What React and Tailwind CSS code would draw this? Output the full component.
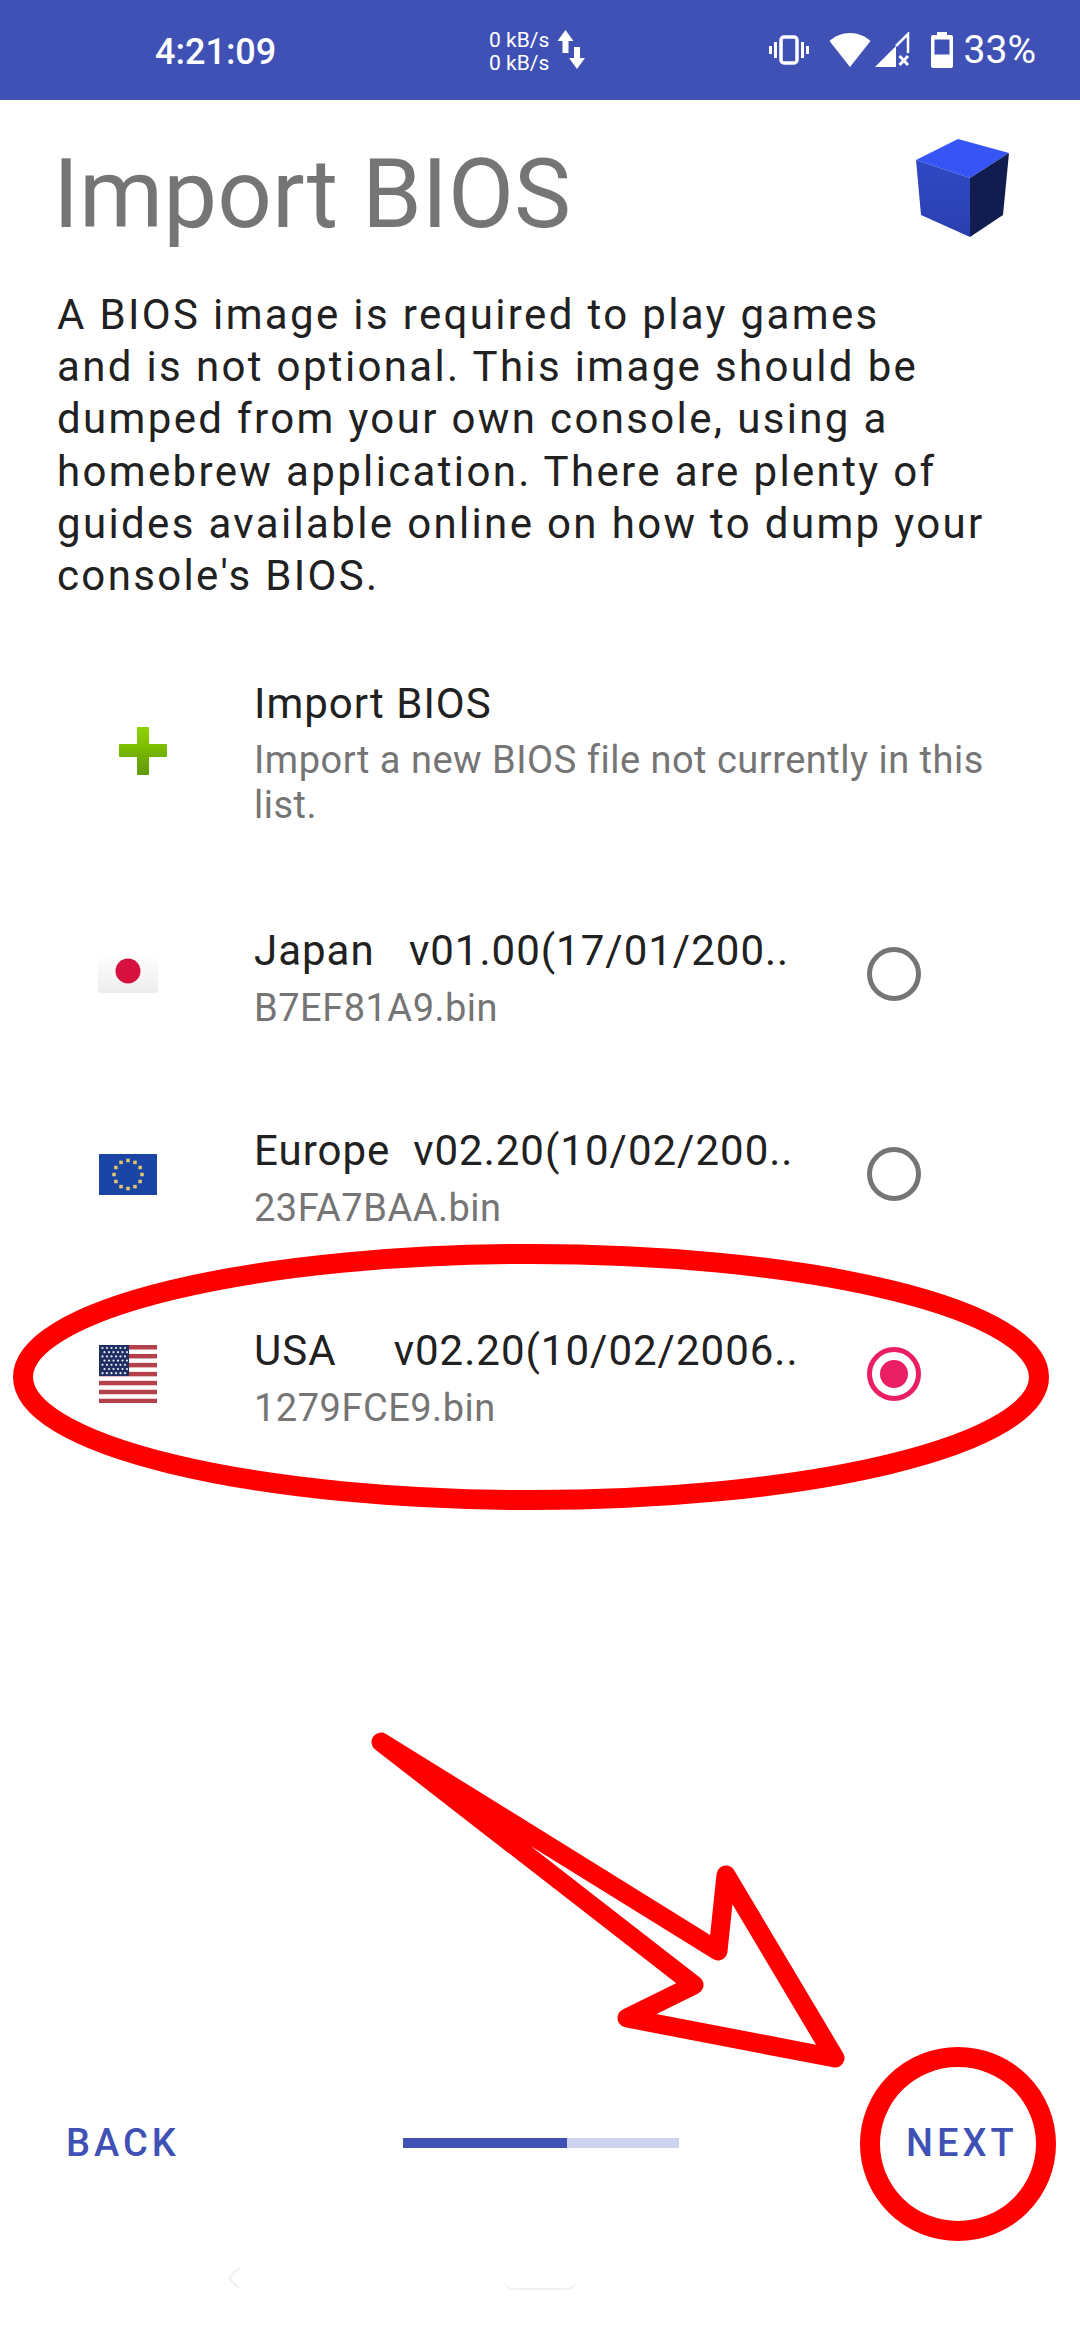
import React from 'react'

const font = { fontFamily: 'Roboto, sans-serif' }

function StatusBar() {
  return (
    <div className="h-[100px] shrink-0 bg-[#3F51B5] text-white relative flex items-center">
      <span className="ml-[155px] w-[135px] mt-[4px] text-[36px] font-medium leading-none">4:21:09</span>
      <div className="ml-[199px] w-[66px] mt-[3px] text-[21px] leading-[23px] whitespace-nowrap">
        <div>0 kB/s</div>
        <div>0 kB/s</div>
      </div>
      <svg width="30" height="44" viewBox="0 0 30 44" className="ml-[2px]" fill="white">
        <path d="M8.500 2 L16.500 13 H11.500 V25 H5.500 V13 H0.500 Z" />
        <path d="M20 41 L12 30 H17 V19 H23 V30 H28 Z" />
      </svg>
      <div className="ml-auto mr-[44px] flex items-center">
        <svg width="40" height="36" viewBox="0 0 40 36" fill="none" stroke="white" strokeWidth="3">
          <rect x="12" y="5" width="16" height="26" rx="3" strokeWidth="3.500" />
          <path d="M6.500 10 V26 M1.500 14 V22 M33.500 10 V26 M38.500 14 V22" />
        </svg>
        <svg width="42" height="36" viewBox="0 0 42 36" fill="white" className="ml-[20px]">
          <path d="M21 35 L0.500 9 C6 4 13 1 21 1 C29 1 36 4 41.500 9 Z" />
        </svg>
        <svg width="36" height="36" viewBox="0 0 36 36" className="ml-[4px]">
          <path d="M0 35 L21 14 V35 Z" fill="white" />
          <path d="M21 14 L33 2 V21" fill="none" stroke="white" strokeWidth="2.500" />
          <path d="M24.500 24 L33 33 M33 24 L24.500 33" stroke="white" strokeWidth="3" />
        </svg>
        <svg width="22" height="36" viewBox="0 0 22 36" fill="white" className="ml-[20px]">
          <path d="M6 0 H16 V3 H20 Q22 3 22 5 V34 Q22 36 20 36 H2 Q0 36 0 34 V5 Q0 3 2 3 H6 Z" />
          <rect x="3.500" y="7.500" width="15" height="15" fill="#3F51B5" />
        </svg>
        <span className="ml-[11px] text-[39px] leading-none">33%</span>
      </div>
    </div>
  )
}

function Cube() {
  return (
    <svg width="94" height="100" viewBox="0 0 94 100">
      <defs>
        <linearGradient id="cubeLeft" x1="0" y1="0" x2="0" y2="1">
          <stop offset="0" stopColor="#3049c4" />
          <stop offset="1" stopColor="#2a3fb0" />
        </linearGradient>
      </defs>
      <path d="M0 21 L42 0 L93 14 L54 39 Z" fill="#3755f5" />
      <path d="M0 21 L54 39 L54 98 L5 76 Z" fill="url(#cubeLeft)" />
      <path d="M54 39 L93 14 L87 76 L54 98 Z" fill="#111c4f" />
    </svg>
  )
}

function PlusIcon() {
  return (
    <svg width="50" height="50" viewBox="0 0 50 50">
      <defs>
        <linearGradient id="plusGreen" x1="0" y1="0" x2="0" y2="1">
          <stop offset="0" stopColor="#8fd400" />
          <stop offset="1" stopColor="#5f9a00" />
        </linearGradient>
      </defs>
      <path
        d="M20 1 H30 Q31 1 31 2 V18 H48 Q49 18 49 19 V30 Q49 31 48 31 H31 V48 Q31 49 30 49 H20 Q19 49 19 48 V31 H2 Q1 31 1 30 V19 Q1 18 2 18 H19 V2 Q19 1 20 1 Z"
        fill="url(#plusGreen)"
      />
    </svg>
  )
}

function JapanFlag() {
  return (
    <svg width="60" height="38" viewBox="0 0 60 38">
      <defs>
        <linearGradient id="jpBg" x1="0" y1="0" x2="0" y2="1">
          <stop offset="0" stopColor="#ffffff" />
          <stop offset="1" stopColor="#ececec" />
        </linearGradient>
      </defs>
      <rect width="60" height="38" fill="url(#jpBg)" />
      <circle cx="30" cy="16" r="12.500" fill="#d8103f" />
    </svg>
  )
}

function EuropeFlag() {
  const stars = Array.from({ length: 12 }, (_, i) => {
    const a = (i / 12) * Math.PI * 2
    return { x: 29 + Math.cos(a) * 14 - 1.750, y: 20.500 + Math.sin(a) * 14 - 1.750 }
  })
  return (
    <svg width="58" height="41" viewBox="0 0 58 41">
      <rect width="58" height="41" fill="#1a45a5" />
      {stars.map((s, i) => (
        <rect key={i} x={s.x} y={s.y} width="3.500" height="3.500" fill="#e3c76b" />
      ))}
    </svg>
  )
}

function UsaFlag() {
  const stripes = [0, 1, 2, 3, 4, 5, 6]
  const dots = []
  for (let r = 0; r < 7; r++) {
    for (let c = 0; c < 6; c++) {
      dots.push({ x: 3.500 + c * 4.500 + (r % 2 ? 2 : 0), y: 3 + r * 4.200 })
    }
  }
  return (
    <svg width="58" height="58" viewBox="0 0 58 58">
      {stripes.map(i => (
        <rect key={i} x="0" y={i * 8.950} width="58" height="4.500" fill="#b5404a" />
      ))}
      <rect width="30" height="31" fill="#1f2f63" />
      {dots.map((d, i) => (
        <circle key={i} cx={d.x} cy={d.y} r="1.100" fill="#e6e9f5" />
      ))}
    </svg>
  )
}

function Radio({ checked }) {
  return (
    <div
      className={`w-[54px] h-[54px] rounded-full border-[5px] flex items-center justify-center shrink-0 ${
        checked ? 'border-[#E91E63]' : 'border-[#757575]'
      }`}
    >
      {checked && <div className="w-[28px] h-[28px] rounded-full bg-[#E91E63]" />}
    </div>
  )
}

function BiosRow({ flag, title, file, checked }) {
  return (
    <div className="h-[200px] flex items-center">
      <div className="w-[60px] ml-[98px] flex justify-center shrink-0">{flag}</div>
      <div className="ml-[96px] w-[552px] mt-[10px] flex flex-col">
        <span className="text-[42px] leading-[50px] text-[#212121] whitespace-pre tracking-[1px]">{title}</span>
        <span className="text-[38px] leading-[50px] mt-[7px] text-[#757575] tracking-[0.5px]">{file}</span>
      </div>
      <div className="ml-[61px]">
        <Radio checked={checked} />
      </div>
    </div>
  )
}

function Annotations() {
  return (
    <svg
      width="1080"
      height="2340"
      viewBox="0 0 1080 2340"
      className="absolute left-0 top-0 pointer-events-none"
      fill="none"
      stroke="#ff0000"
    >
      <ellipse cx="531" cy="1377" rx="508" ry="123" strokeWidth="20" />
      <ellipse cx="958" cy="2144" rx="88" ry="87" strokeWidth="20" />
      <path
        d="M381 1742 L718 1951 L726 1875 L835 2058 L627 2018 L694 1985 Z"
        strokeWidth="19"
        strokeLinejoin="round"
      />
    </svg>
  )
}

export default function App() {
  return (
    <div className="relative w-[1080px] h-[2340px] bg-white overflow-hidden flex flex-col" style={font}>
      <StatusBar />

      <div className="pl-[53px] pr-[70px] flex justify-between items-start h-[189px] shrink-0">
        <h1 className="mt-[38px] text-[96px] leading-[112px] font-normal text-[#757575]">Import BIOS</h1>
        <div className="mt-[39px]">
          <Cube />
        </div>
      </div>

      <p className="ml-[57px] w-[1000px] text-[42px] leading-[52.200px] tracking-[2.350px] text-[#212121]">
        A BIOS image is required to play games
        <br />
        and is not optional. This image should be
        <br />
        dumped from your own console, using a
        <br />
        homebrew application. There are plenty of
        <br />
        guides available online on how to dump your
        <br />
        console's BIOS.
      </p>

      <div className="mt-[49px] flex flex-col">
        <div className="h-[200px] mb-[23px] flex items-center">
          <div className="w-[50px] ml-[118px] shrink-0">
            <PlusIcon />
          </div>
          <div className="ml-[86px] w-[760px] mt-[5px] flex flex-col">
            <span className="text-[42px] leading-[50px] text-[#212121] tracking-[1px]">Import BIOS</span>
            <span className="text-[38px] leading-[45px] mt-[9px] text-[#757575] tracking-[0.5px]">
              Import a new BIOS file not currently in this list.
            </span>
          </div>
        </div>
        <BiosRow flag={<JapanFlag />} title="Japan   v01.00(17/01/200.." file="B7EF81A9.bin" />
        <BiosRow flag={<EuropeFlag />} title="Europe  v02.20(10/02/200.." file="23FA7BAA.bin" />
        <BiosRow flag={<UsaFlag />} title="USA     v02.20(10/02/2006.." file="1279FCE9.bin" checked />
      </div>

      <div className="mt-auto h-[240px] shrink-0 relative">
        <div className="w-full flex items-center h-[86px]">
          <span className="ml-[66px] w-[337px] text-[38px] font-medium text-[#3F51B5] tracking-[4px]">BACK</span>
          <div className="w-[276px] h-[10px] bg-[#CDD2EE] flex">
            <div className="w-[164px] bg-[#3F51B5]" />
          </div>
          <span className="ml-[227px] text-[38px] font-medium text-[#3F51B5] tracking-[4px]">NEXT</span>
        </div>
        {/* faint nav bar hints */}
        <div className="absolute left-[503px] top-[170px] w-[75px] h-[20px] rounded-b-[12px] border-b-2 border-[#f0f0f0]" />
        <svg width="20" height="24" viewBox="0 0 20 24" className="absolute left-[224px] top-[166px]" fill="none" stroke="#f0f0f0" strokeWidth="2">
          <path d="M15 2 L5 12 L15 22" />
        </svg>
      </div>

      <Annotations />
    </div>
  )
}
